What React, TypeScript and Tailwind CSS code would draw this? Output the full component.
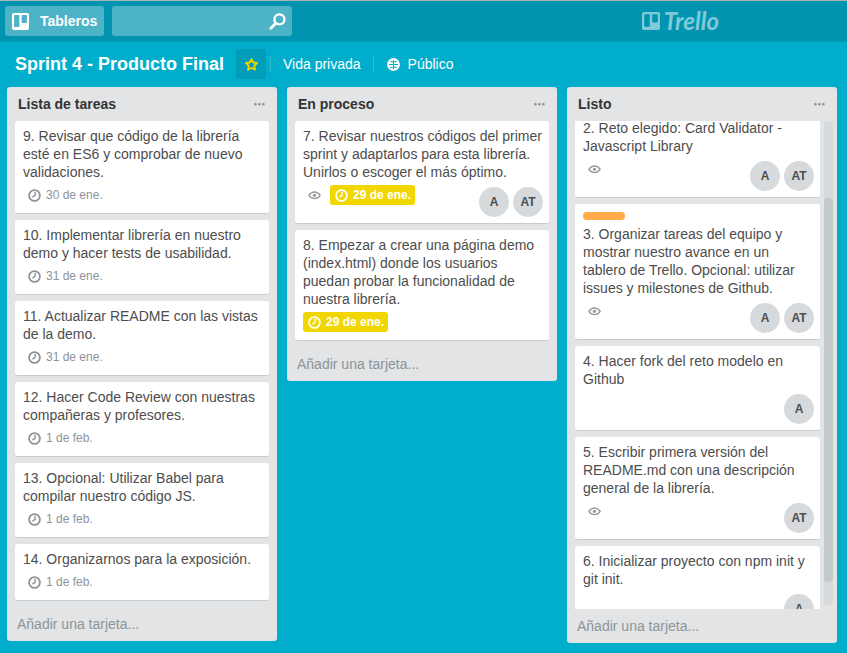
import { useEffect, useRef } from 'react';

type Due = { text: string; soon?: boolean };
type CardData = { title: string; due?: Due; watching?: boolean; label?: boolean; members?: string[] };

const todo: CardData[] = [
  { title: '9. Revisar que código de la librería esté en ES6 y comprobar de nuevo validaciones.', due: { text: '30 de ene.' } },
  { title: '10. Implementar librería en nuestro demo y hacer tests de usabilidad.', due: { text: '31 de ene.' } },
  { title: '11. Actualizar README con las vistas de la demo.', due: { text: '31 de ene.' } },
  { title: '12. Hacer Code Review con nuestras compañeras y profesores.', due: { text: '1 de feb.' } },
  { title: '13. Opcional: Utilizar Babel para compilar nuestro código JS.', due: { text: '1 de feb.' } },
  { title: '14. Organizarnos para la exposición.', due: { text: '1 de feb.' } },
];

const doing: CardData[] = [
  {
    title: '7. Revisar nuestros códigos del primer sprint y adaptarlos para esta librería. Unirlos o escoger el más óptimo.',
    watching: true,
    due: { text: '29 de ene.', soon: true },
    members: ['A', 'AT'],
  },
  {
    title: '8. Empezar a crear una página demo (index.html) donde los usuarios puedan probar la funcionalidad de nuestra librería.',
    due: { text: '29 de ene.', soon: true },
  },
];

const done: CardData[] = [
  { title: '2. Reto elegido: Card Validator - Javascript Library', watching: true, members: ['A', 'AT'] },
  {
    title: '3. Organizar tareas del equipo y mostrar nuestro avance en un tablero de Trello. Opcional: utilizar issues y milestones de Github.',
    watching: true,
    label: true,
    members: ['A', 'AT'],
  },
  { title: '4. Hacer fork del reto modelo en Github', members: ['A'] },
  { title: '5. Escribir primera versión del README.md con una descripción general de la librería.', watching: true, members: ['AT'] },
  { title: '6. Inicializar proyecto con npm init y git init.', members: ['A'] },
];

function ClockIcon() {
  return (
    <svg viewBox="0 0 13 13" className="size-[13px] shrink-0" fill="none" stroke="currentColor" aria-hidden="true">
      <circle cx="6.5" cy="6.5" r="5.4" strokeWidth="1.8" />
      <path d="M7.1 2.8V6.4L4.4 8.2" strokeWidth="1.4" />
    </svg>
  );
}

function EyeIcon() {
  return (
    <svg viewBox="0 0 13 13" className="size-[13px] shrink-0" fill="none" stroke="currentColor" aria-hidden="true">
      <path d="M.8 6.3C2.4 4 4.4 3 6.5 3S10.6 4 12.2 6.3C10.6 8.6 8.6 9.6 6.5 9.6S2.4 8.6 .8 6.3Z" strokeWidth="1.3" />
      <circle cx="6.5" cy="6.3" r="1.6" fill="currentColor" stroke="none" />
    </svg>
  );
}

function BoardIcon({ className }: { className: string }) {
  return (
    <svg viewBox="0 0 18 18" className={className} fill="currentColor" aria-hidden="true">
      <path
        fillRule="evenodd"
        d="M2 0H16A2 2 0 0 1 18 2V16A2 2 0 0 1 16 18H2A2 2 0 0 1 0 16V2A2 2 0 0 1 2 0ZM3 2.2A.8.8 0 0 0 2.2 3V14A.8.8 0 0 0 3 14.8H7A.8.8 0 0 0 7.8 14V3A.8.8 0 0 0 7 2.2ZM11 2.2A.8.8 0 0 0 10.2 3V9.8A.8.8 0 0 0 11 10.6H15A.8.8 0 0 0 15.8 9.8V3A.8.8 0 0 0 15 2.2Z"
      />
    </svg>
  );
}

function Card({ title, due, watching, label, members }: CardData) {
  return (
    <article className="mb-1.5 flow-root shrink-0 rounded-[3px] border-b border-[#c8cccf] bg-white pt-1.5 pr-1.5 pl-2">
      {label && <div className="mt-0.5 mb-[5px] h-2 w-[42px] rounded-[4px] bg-[#ffab4a]" />}
      <p>{title}</p>
      <div className="flex items-start justify-between">
        <div className="mt-1 mb-2 flex gap-1 text-xs">
          {watching && (
            <span className="flex h-5 items-center px-[5px] text-[#999]">
              <EyeIcon />
            </span>
          )}
          {due && (
            <span
              className={
                due.soon
                  ? 'flex h-5 items-center gap-[5px] rounded-[3px] bg-[#f2d600] pr-1 pl-[5px] font-bold text-white'
                  : 'flex h-5 items-center gap-[5px] pr-1 pl-[5px] text-[#8c9499]'
              }
            >
              <ClockIcon />
              {due.text}
            </span>
          )}
        </div>
        {members && (
          <div className="flex gap-1 py-1.5">
            {members.map((m) => (
              <span key={m} className="flex size-[30px] items-center justify-center rounded-full bg-[#d6dadc] text-xs font-bold">
                {m}
              </span>
            ))}
          </div>
        )}
      </div>
    </article>
  );
}

function List({ name, cards, scrolled }: { name: string; cards: CardData[]; scrolled?: boolean }) {
  const body = useRef<HTMLDivElement>(null);
  useEffect(() => {
    if (scrolled && body.current) body.current.scrollTop = 8;
  }, [scrolled]);

  return (
    <section className="flex max-h-full min-w-60 flex-1 flex-col rounded-[3px] bg-[#e2e4e6]">
      <header className="flex h-[34px] shrink-0 items-center justify-between pr-3 pl-[11px]">
        <h2 className="font-bold text-[#333]">{name}</h2>
        <button type="button" aria-label="Menú de la lista" className="text-[#999]">
          <svg viewBox="0 0 11 3" className="h-[3px] w-[11px]" fill="currentColor" aria-hidden="true">
            <rect width="2.7" height="2.5" x="0" rx=".8" />
            <rect width="2.7" height="2.5" x="4" rx=".8" />
            <rect width="2.7" height="2.5" x="8" rx=".8" />
          </svg>
        </button>
      </header>
      <div className="flex min-h-0 flex-1 gap-1 pl-2">
        <div
          ref={body}
          className={
            scrolled
              ? 'flex min-w-0 flex-1 flex-col overflow-y-auto [scrollbar-width:none]'
              : 'mr-2 flex min-w-0 flex-1 flex-col'
          }
        >
          {cards.map((c) => (
            <Card key={c.title} {...c} />
          ))}
        </div>
        {scrolled && (
          <div className="mr-1 mb-1 flex w-[9px] flex-col rounded-[4px] bg-[#d6dadc]">
            <div className="flex-[77]" />
            <div className="flex-[384] rounded-[4px] bg-[#c4c9cc]" />
            <div className="flex-[23]" />
          </div>
        )}
      </div>
      <button type="button" className="h-[34px] shrink-0 px-2.5 text-left text-[#8c9499]">
        Añadir una tarjeta...
      </button>
    </section>
  );
}

export default function App() {
  return (
    <div className="flex h-screen flex-col bg-[#00aecc] font-['Liberation_Sans',Arial,sans-serif] text-sm leading-[18px] text-[#4d4d4d]">
      <header className="flex h-[41px] shrink-0 items-center gap-2 border-t border-[#a9b4b8] bg-[#0094b0] px-[5px] shadow-[0_1px_1px_rgba(0,0,0,0.08)]">
        <button type="button" className="flex h-[30px] items-center gap-[11px] rounded-[3px] bg-[#4db4c8] px-[7px] font-bold text-white">
          <BoardIcon className="size-[17px]" />
          Tableros
        </button>
        <label className="flex h-[30px] w-[180px] items-center rounded-[3px] bg-[#4db4c8] pr-1.5 text-white">
          <input type="text" aria-label="Buscar" className="min-w-0 flex-1 bg-transparent px-2 outline-none" />
          <svg viewBox="0 0 17 17" className="size-[17px] shrink-0" fill="none" stroke="currentColor" aria-hidden="true">
            <circle cx="10.4" cy="6.4" r="5" strokeWidth="2.4" />
            <path d="M6.8 10.2L1.8 15.2" strokeWidth="2.8" strokeLinecap="round" />
          </svg>
        </label>
        <a href="#" aria-label="Trello" className="mr-[123px] ml-auto flex items-center gap-1 text-[#80cad8]">
          <BoardIcon className="size-[18px]" />
          <span className="font-['Lato',sans-serif] text-2xl leading-[18px] font-bold italic">Trello</span>
        </a>
      </header>

      <div className="flex h-[46px] shrink-0 items-center pl-[15px] text-white">
        <h1 className="text-lg font-bold">Sprint 4 - Producto Final</h1>
        <button type="button" aria-label="Marcar tablero" className="ml-3 flex size-[30px] items-center justify-center rounded-[3px] bg-[#009cb8] text-[#f2d600]">
          <svg viewBox="0 0 13 13" className="size-[13px]" fill="none" stroke="currentColor" strokeWidth="1.8" strokeLinejoin="round" aria-hidden="true">
            <path d="M6.5 1.1L8.2 4.5L12.1 5L9.3 7.7L10 11.7L6.5 9.8L3 11.7L3.7 7.7L.9 5L4.8 4.5Z" />
          </svg>
        </button>
        <span className="ml-1 h-3.5 w-px bg-[#33bed6]" />
        <button type="button" className="px-3">Vida privada</button>
        <span className="h-3.5 w-px bg-[#33bed6]" />
        <button type="button" className="flex items-center gap-2 px-[13px]">
          <svg viewBox="0 0 13 13" className="size-[13px]" aria-hidden="true">
            <circle cx="6.5" cy="6.5" r="6.4" fill="white" />
            <path
              d="M6.5 2V11M2 6.5H11M3.2 3.4Q6.5 4.6 9.8 3.4M3.2 9.6Q6.5 8.4 9.8 9.6"
              fill="none"
              stroke="#00aecc"
              strokeWidth="1"
            />
          </svg>
          Público
        </button>
      </div>

      <main className="flex min-h-0 flex-1 items-start gap-2.5 pr-2.5 pb-2.5 pl-[7px]">
        <List name="Lista de tareas" cards={todo} />
        <List name="En proceso" cards={doing} />
        <List name="Listo" cards={done} scrolled />
      </main>
    </div>
  );
}
